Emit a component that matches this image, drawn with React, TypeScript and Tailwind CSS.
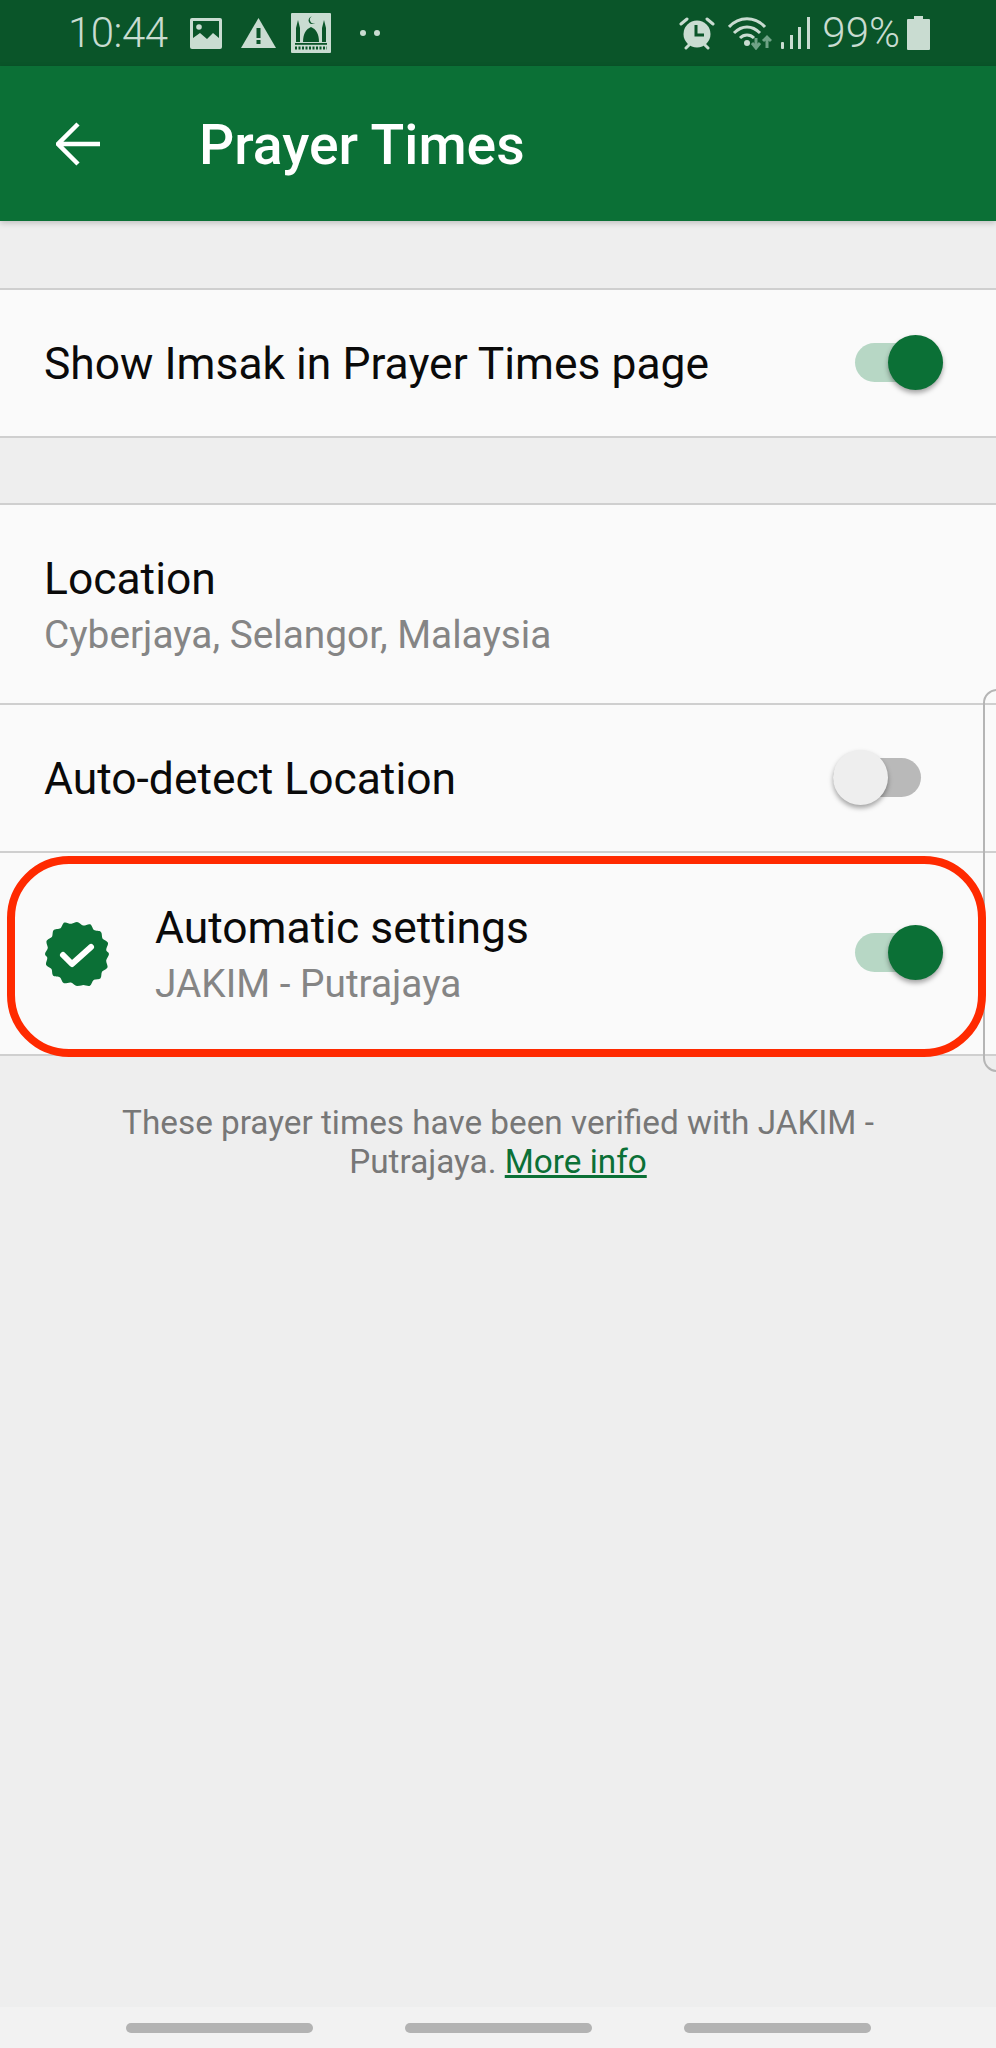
const roboto = { fontFamily: "Roboto, 'Liberation Sans', sans-serif" };

function Toggle({ on }: { on: boolean }) {
  return (
    <div className={`relative mb-[2px] h-[39px] w-[88px] rounded-full ${on ? "bg-[#b7d7c5]" : "bg-[#b9b9b9]"}`}>
      <div
        className={`absolute top-[-8px] h-[55px] w-[55px] rounded-full shadow-[0_3px_5px_rgba(0,0,0,0.35)] ${
          on ? "right-0 bg-[#0b7036]" : "left-0 bg-[#eeeeee]"
        }`}
      />
    </div>
  );
}

function Row({ title, sub, toggle, icon, h }: { title: string; sub?: string; toggle?: "on" | "off"; icon?: boolean; h: string }) {
  return (
    <div className={`flex items-center justify-between bg-[#fafafa] pl-[44px] ${h} ${toggle === "off" ? "pr-[75px]" : "pr-[53px]"}`}>
      <div className="flex items-center">
        {icon && (
          <svg viewBox="0 0 64 64" className="ml-[1px] mr-[46px] h-[64px] w-[64px]">
            <path
              fill="#0b7036"
              d="M32 0c2 0 4 3 6 3.500s5-1.800 7-1.200 2.500 4.500 4 5.700 5.700.3 7 1.900.6 5 1.500 6.500 5 2.500 5.500 4.500-1.800 4.700-1.800 6.800S64 30 64 32s-2.600 4.500-2.800 6.500 1.800 4.800 1.300 6.800-4.500 3-5.500 4.500-.2 5-1.500 6.500-5.500.7-7 1.900-2 5.200-4 5.700-5-1.200-7-.7S34 64 32 64s-4-3-6-3.500-5 1.200-7 .7-2.500-4.500-4-5.700-5.700-.4-7-1.900-.5-5-1.500-6.500-5-2.500-5.500-4.500 1.500-4.800 1.300-6.800S0 34 0 32s2.600-4 2.800-6-1.800-4.800-1.300-6.800 4.500-3 5.500-4.500.2-5 1.500-6.500 5.500-.7 7-1.900 2-5.100 4-5.700 5 1.700 7 1.200S30 0 32 0z"
            />
            <path d="M18 33l9 9 19-17" fill="none" stroke="#fff" strokeWidth="6" strokeLinecap="round" strokeLinejoin="round" />
          </svg>
        )}
        <div className={sub ? "mt-[5px]" : "mt-[2px]"}>
          <div className="text-[44.400px] leading-[56px] text-[#0a0a0a]">{title}</div>
          {sub && <div className="text-[38.800px] leading-[56px] text-[#858585]">{sub}</div>}
        </div>
      </div>
      {toggle && <Toggle on={toggle === "on"} />}
    </div>
  );
}

export default function App() {
  const ic = "#c9dcd1";
  const dk = "#0a5529";
  return (
    <div className="relative flex h-[2048px] w-[996px] flex-col overflow-hidden bg-[#eeeeee]" style={roboto}>
      {/* status bar */}
      <div className="flex h-[66px] items-center bg-[#0a5529] pl-[68px] pr-[66px] text-[#c9dcd1]">
        <span className="text-[42px] font-light leading-none tracking-[-0.5px]">10:44</span>
        <svg viewBox="0 0 32 31" className="ml-[22px] h-[31px] w-[32px]">
          <rect width="32" height="31" rx="2" fill={ic} />
          <rect x="3" y="3" width="26" height="25" fill={dk} />
          <path d="M3 28V20l7-5 7 6 6-6 6 5v8z" fill={ic} />
          <circle cx="9" cy="9" r="2.800" fill={ic} />
        </svg>
        <svg viewBox="0 0 35 30" className="ml-[19px] h-[30px] w-[35px]">
          <path d="M17.500 0L35 30H0z" fill={ic} />
          <rect x="15.500" y="10" width="4" height="10" fill={dk} />
          <rect x="15.500" y="22" width="4" height="4" fill={dk} />
        </svg>
        <svg viewBox="0 0 40 40" className="ml-[15px] h-[40px] w-[40px]">
          <rect width="40" height="40" rx="1" fill={ic} />
          <path d="M20 14c-5 2-8 7-8 15h16c0-8-3-13-8-15z" fill={dk} />
          <path d="M7 7l2 8v14H5V15zM33 7l2 8v14h-4V15z" fill={dk} />
          <path d="M21 3.500a3.800 3.800 0 1 0 3 6.500 3.500 3.500 0 0 1-3-6.500z" fill={dk} />
          <rect x="4" y="30" width="32" height="1.800" fill={dk} />
          <path d="M4 35h32" stroke={dk} strokeWidth="3" strokeDasharray="2 1.500" />
        </svg>
        <div className="ml-[29px] flex gap-[8px]">
          <div className="h-[6px] w-[6px] rounded-full bg-[#c9dcd1]" />
          <div className="h-[6px] w-[6px] rounded-full bg-[#c9dcd1]" />
        </div>
        <div className="ml-auto flex items-center">
          <svg viewBox="0 0 36 34" className="h-[34px] w-[36px]">
            <circle cx="18" cy="18" r="13.500" fill={ic} />
            <path d="M17 9v10h8" fill="none" stroke={dk} strokeWidth="3" />
            <path d="M2 8l6-5M34 8l-6-5M7 32l3-3M29 32l-3-3" stroke={ic} strokeWidth="3" strokeLinecap="round" />
          </svg>
          <svg viewBox="0 0 44 34" className="ml-[13px] h-[34px] w-[44px]">
            <path d="M1 11C11 0 27 0 37 11" fill="none" stroke={ic} strokeWidth="3" />
            <path d="M6 17c8-8 18-8 26 0" fill="none" stroke={ic} strokeWidth="3" />
            <path d="M12 22c4-4 10-4 14 0" fill="none" stroke={ic} strokeWidth="3" />
            <circle cx="19" cy="27" r="3" fill={ic} />
            <path d="M28 22v9m-4-4l4 5 4-5" fill="none" stroke="#6fa386" strokeWidth="3" />
            <path d="M39 32v-10m-4 3l4-4 4 4" fill="none" stroke="#6fa386" strokeWidth="3" />
          </svg>
          <svg viewBox="0 0 29 32" className="ml-[9px] h-[32px] w-[29px]">
            <rect x="0" y="25" width="3" height="7" rx="1" fill={ic} />
            <rect x="9" y="18" width="3" height="14" fill={ic} />
            <rect x="17" y="10" width="3" height="22" fill={ic} />
            <rect x="26" y="0" width="3" height="32" fill={ic} />
          </svg>
          <span className="ml-[12px] text-[42px] font-light leading-none">99%</span>
          <svg viewBox="0 0 23 34" className="ml-[7px] h-[34px] w-[23px]">
            <path d="M7 0h9v3h6a1 1 0 0 1 1 1v29a1 1 0 0 1-1 1H1a1 1 0 0 1-1-1V4a1 1 0 0 1 1-1h6z" fill={ic} />
          </svg>
        </div>
      </div>

      {/* toolbar */}
      <div className="z-10 flex h-[155px] items-center bg-[#0b7036] pl-[56px] shadow-[0_2px_6px_rgba(0,0,0,0.2)]">
        <svg viewBox="0 0 44 44" className="h-[44px] w-[44px]">
          <path d="M44 22H3M22 2L2 22l20 20" fill="none" stroke="#fff" strokeWidth="4.500" />
        </svg>
        <span className="ml-[99px] mt-[5px] text-[55.300px] font-medium leading-none text-white">Prayer Times</span>
      </div>

      {/* groups */}
      <div className="mt-[67px] divide-y-[2px] divide-[#cfcfcf] border-y-[2px] border-[#cfcfcf]">
        <Row title="Show Imsak in Prayer Times page" toggle="on" h="h-[146px]" />
      </div>
      <div className="mt-[65px] divide-y-[2px] divide-[#cfcfcf] border-y-[2px] border-[#cfcfcf]">
        <Row title="Location" sub="Cyberjaya, Selangor, Malaysia" h="h-[200px]" />
        <Row title="Auto-detect Location" toggle="off" h="h-[148px]" />
        <Row title="Automatic settings" sub="JAKIM - Putrajaya" toggle="on" icon h="h-[201px]" />
      </div>

      {/* footer note */}
      <p className="mx-auto mt-[47px] w-[800px] text-center text-[33.300px] leading-[39px] text-[#777777]">
        These prayer times have been verified with JAKIM -<br />
        Putrajaya. <a className="text-[#0b7036] underline">More info</a>
      </p>

      {/* nav bar */}
      <div className="absolute bottom-0 left-0 flex h-[41px] w-full items-center bg-[#f2f2f2] pl-[126px]">
        <div className="h-[10px] w-[187px] rounded-full bg-[#b3b3b3]" />
        <div className="ml-[92px] h-[10px] w-[187px] rounded-full bg-[#b3b3b3]" />
        <div className="ml-[92px] h-[10px] w-[187px] rounded-full bg-[#b3b3b3]" />
      </div>

      {/* edge panel handle */}
      <div className="absolute left-[983px] top-[689px] h-[383px] w-[20px] rounded-l-[14px] border-2 border-[#b5b5b5]" />

      {/* red annotation */}
      <div className="absolute left-[7px] top-[856px] h-[201px] w-[979px] rounded-[62px] border-[8px] border-[#ff2a00]" />
    </div>
  );
}
